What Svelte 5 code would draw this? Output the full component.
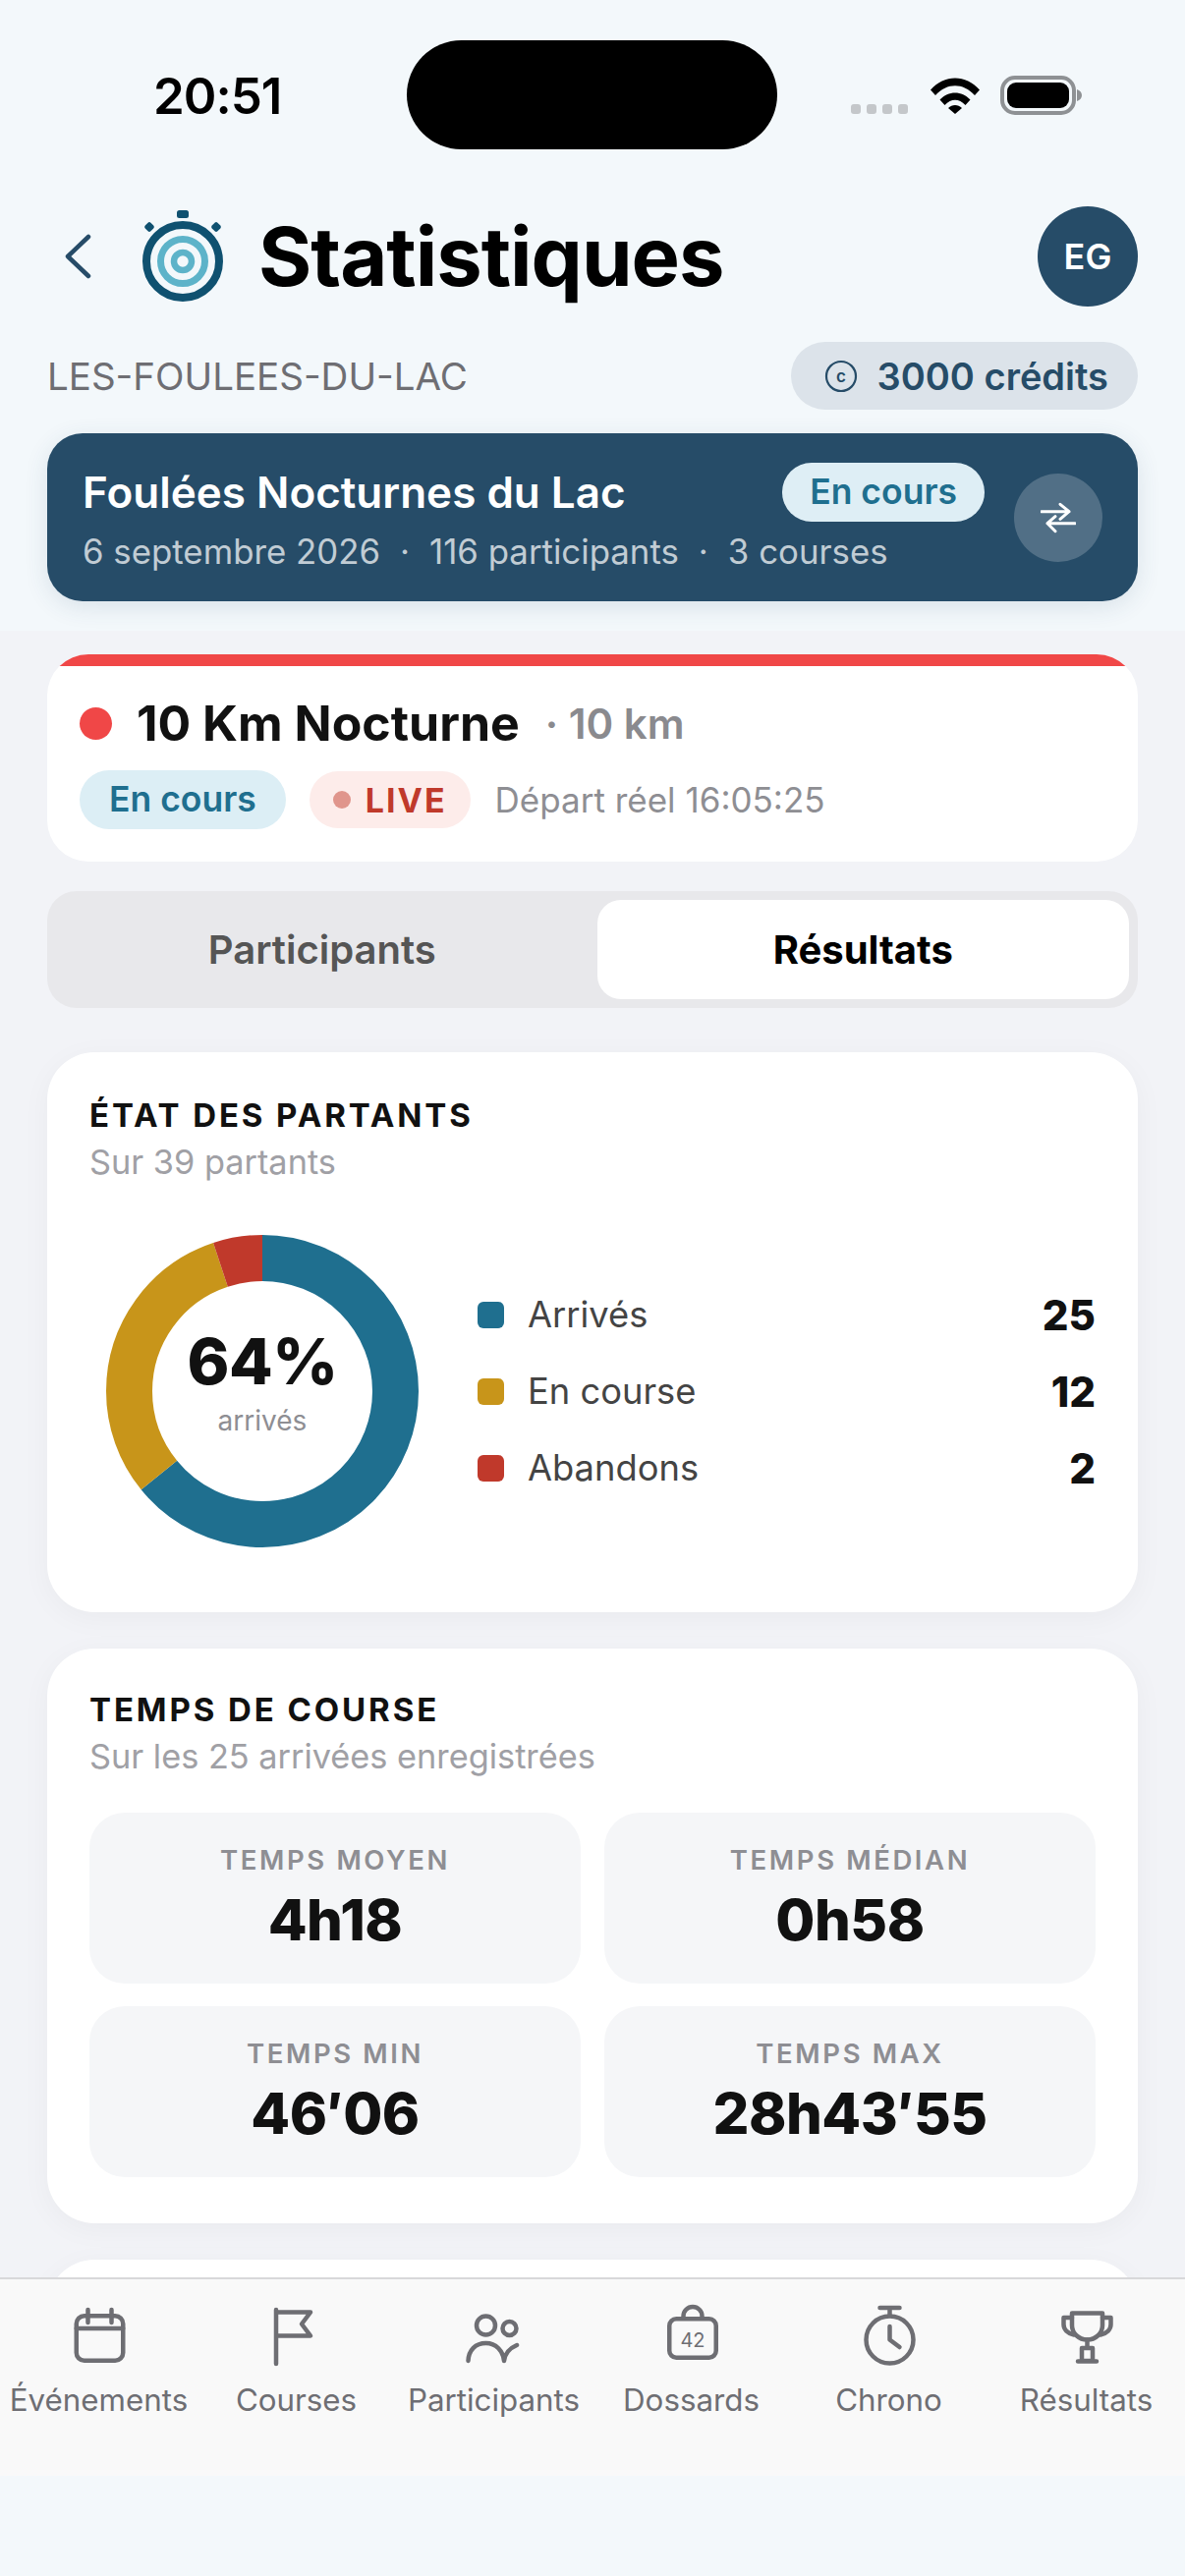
<script lang="ts">
	const legend = [
		{ label: 'Arrivés', value: 25, color: '#1f6f8f' },
		{ label: 'En course', value: 12, color: '#c8951a' },
		{ label: 'Abandons', value: 2, color: '#c0392b' }
	];
	const total = legend.reduce((sum, item) => sum + item.value, 0);

	// donut ring geometry, one dashed circle per segment
	const radius = 135.5;
	const circumference = 2 * Math.PI * radius;
	let acc = 0;
	const segments = legend.map((item) => {
		const length = (item.value / total) * circumference;
		const seg = { color: item.color, length, offset: -acc };
		acc += length;
		return seg;
	});

	const times = [
		{ label: 'TEMPS MOYEN', value: '4h18' },
		{ label: 'TEMPS MÉDIAN', value: '0h58' },
		{ label: 'TEMPS MIN', value: '46′06' },
		{ label: 'TEMPS MAX', value: '28h43′55' }
	];
</script>

<svelte:head>
	<title>Statistiques</title>
</svelte:head>

<div class="screen">
	<header class="top">
		<div class="status">
			<span class="time">20:51</span>
			<div class="island"></div>
			<div class="status-icons">
				<div class="signal"><i></i><i></i><i></i><i></i></div>
				<svg class="wifi" width="50" height="37" viewBox="0 0 50 37" aria-hidden="true">
					<path d="M0 12.5C14-3.5 36-3.5 50 12.5L45 18C33 5 17 5 5 18Z" />
					<path d="M9.5 22.5C18 13 32 13 40.5 22.5L35.5 28C29 21 21 21 14.5 28Z" />
					<path d="M18 31C22 27 28 27 32 31L25 37Z" />
				</svg>
				<svg class="battery" width="84" height="40" viewBox="0 0 84 40" aria-hidden="true">
					<rect x="2" y="2" width="73" height="36" rx="13" fill="none" stroke="#8e9194" stroke-width="4" />
					<rect x="7" y="7" width="63" height="26" rx="9" fill="#000" />
					<path d="M78 14c3 1 5 3 5 6s-2 5-5 6z" fill="#8e9194" />
				</svg>
			</div>
		</div>

		<div class="title-row">
			<button class="back" type="button" aria-label="Retour">
				<svg width="30" height="50" viewBox="0 0 30 50">
					<path d="M26 5L5 25L26 45" fill="none" stroke="#264c68" stroke-width="4.5" stroke-linecap="round" stroke-linejoin="round" />
				</svg>
			</button>
			<svg class="logo" width="92" height="102" viewBox="0 0 92 102" aria-hidden="true">
				<rect x="40" y="4" width="12" height="8" rx="2.5" fill="#0f5170" />
				<rect x="8" y="17" width="8" height="8" rx="2" fill="#0f5170" transform="rotate(45 12 21)" />
				<rect x="76" y="17" width="8" height="8" rx="2" fill="#0f5170" transform="rotate(45 80 21)" />
				<circle cx="46" cy="56" r="37" fill="none" stroke="#0f5170" stroke-width="8" />
				<circle cx="46" cy="56" r="22.5" fill="none" stroke="#5db3c9" stroke-width="7" />
				<circle cx="46" cy="56" r="9" fill="none" stroke="#5db3c9" stroke-width="6.5" />
			</svg>
			<h1>Statistiques</h1>
			<div class="avatar">EG</div>
		</div>

		<div class="org-row">
			<span class="org">LES-FOULEES-DU-LAC</span>
			<div class="credits">
				<svg width="34" height="34" viewBox="0 0 34 34" aria-hidden="true">
					<circle cx="17" cy="17" r="15" fill="none" stroke="#264c68" stroke-width="2.2" />
					<text x="17" y="22.5" text-anchor="middle" font-size="17" font-weight="600" fill="#264c68">c</text>
				</svg>
				3000 crédits
			</div>
		</div>

		<div class="event">
			<div class="event-main">
				<div class="event-head">
					<span class="event-name">Foulées Nocturnes du Lac</span>
					<span class="event-pill">En cours</span>
				</div>
				<div class="event-sub">
					<span>6 septembre 2026</span><b>·</b><span>116 participants</span><b>·</b><span>3 courses</span>
				</div>
			</div>
			<button class="swap" type="button" aria-label="Changer">
				<svg width="36" height="36" viewBox="0 0 36 36">
					<path d="M1 11.7H29M20 4.3L29 11.7L20 19.3M35 23.7H7M15 16.7L7 23.7L15 31.7" fill="none" stroke="#fff" stroke-width="3" stroke-linecap="round" stroke-linejoin="round" />
				</svg>
			</button>
		</div>
	</header>

	<main class="content">
		<section class="race">
			<div class="race-title">
				<span class="race-dot"></span>
				<h2>10 Km Nocturne</h2>
				<span class="race-dist">· 10 km</span>
			</div>
			<div class="race-meta">
				<span class="race-pill">En cours</span>
				<span class="live"><i></i>LIVE</span>
				<span class="start">Départ réel 16:05:25</span>
			</div>
		</section>

		<div class="tabs">
			<button type="button" class="tab">Participants</button>
			<button type="button" class="tab active">Résultats</button>
		</div>

		<section class="card state">
			<h3>ÉTAT DES PARTANTS</h3>
			<p class="card-sub">Sur {total} partants</p>
			<div class="chart-row">
				<div class="donut">
					<svg width="318" height="318" viewBox="0 0 318 318" aria-hidden="true">
						<g transform="rotate(-90 159 159)">
							{#each segments as seg}
								<circle
									cx="159"
									cy="159"
									r={radius}
									fill="none"
									stroke={seg.color}
									stroke-width="47"
									stroke-dasharray="{seg.length} {circumference - seg.length}"
									stroke-dashoffset={seg.offset}
								/>
							{/each}
						</g>
					</svg>
					<div class="donut-label">
						<strong>64%</strong>
						<span>arrivés</span>
					</div>
				</div>
				<ul class="legend">
					{#each legend as item}
						<li>
							<i style="background: {item.color}"></i>
							<span>{item.label}</span>
							<b>{item.value}</b>
						</li>
					{/each}
				</ul>
			</div>
		</section>

		<section class="card times">
			<h3>TEMPS DE COURSE</h3>
			<p class="card-sub">Sur les 25 arrivées enregistrées</p>
			<div class="time-grid">
				{#each times as t}
					<div class="tile">
						<span>{t.label}</span>
						<strong>{t.value}</strong>
					</div>
				{/each}
			</div>
		</section>

		<section class="card next"></section>
	</main>

	<nav class="tabbar">
		<a href="#evenements">
			<svg width="72" height="72" viewBox="0 0 72 72" aria-hidden="true">
				<rect x="12.75" y="14.25" width="47.5" height="45.5" rx="8" />
				<path d="M12.75 27H60.25M24.5 8V21M48.5 8V21" />
			</svg>
			<span>Événements</span>
		</a>
		<a href="#courses">
			<svg width="72" height="72" viewBox="0 0 72 72" aria-hidden="true">
				<path d="M15 8V63M15 10.5H50L41 22.5L50 34.5H15" />
			</svg>
			<span>Courses</span>
		</a>
		<a href="#participants">
			<svg width="72" height="72" viewBox="0 0 72 72" aria-hidden="true">
				<circle cx="27.5" cy="24" r="9.5" />
				<circle cx="51.5" cy="27" r="7" />
				<path d="M9.5 60C10 49 17 42 27.5 42C38 42 45 50 46 60C47 52 52 47 59 44" />
			</svg>
			<span>Participants</span>
		</a>
		<a href="#dossards">
			<svg width="72" height="72" viewBox="0 0 72 72" aria-hidden="true">
				<rect x="13.25" y="17.25" width="47.5" height="39.5" rx="7" />
				<path d="M27.5 16V14.5a9.5 9.5 0 0 1 19 0V16" />
				<text x="37" y="46" text-anchor="middle" font-size="20">42</text>
			</svg>
			<span>Dossards</span>
		</a>
		<a href="#chrono">
			<svg width="72" height="72" viewBox="0 0 72 72" aria-hidden="true">
				<circle cx="36.5" cy="38.5" r="24" />
				<path d="M26.5 6H46.5M36.5 6V14M36.5 25V38.5L46.5 46" />
			</svg>
			<span>Chrono</span>
		</a>
		<a href="#resultats">
			<svg width="72" height="72" viewBox="0 0 72 72" aria-hidden="true">
				<path d="M21 11.5H52V24C52 32 45 38.5 36.5 38.5C28 38.5 21 32 21 24Z" />
				<path d="M21 16H12.5V23C12.5 28 16.5 32 23 33.5M52 16H60.5V23C60.5 28 56.5 32 50 33.5" />
				<path d="M36.5 38.5V47M31 47H42V60H31ZM27 60.5H46" />
			</svg>
			<span>Résultats</span>
		</a>
	</nav>
	<div class="home-area"></div>
</div>

<style>
	:global(body) {
		margin: 0;
		font-family: Inter, 'Liberation Sans', sans-serif;
		background: #f3f8fb;
		color: #111;
	}

	:global(*) {
		box-sizing: border-box;
	}

	.screen {
		width: 1206px;
		height: 2622px;
		display: flex;
		flex-direction: column;
		overflow: hidden;
		background: #f3f8fb;
	}

	.top {
		flex: none;
		padding-bottom: 30px;
		background: #f3f8fb;
	}

	.status {
		position: relative;
		height: 210px;
		display: flex;
		justify-content: space-between;
		align-items: flex-start;
		padding: 72px 104px 0 156px;
	}

	.time {
		font-size: 51px;
		line-height: 52px;
		font-weight: 600;
		color: #000;
		letter-spacing: -1px;
	}

	.island {
		position: absolute;
		left: 414px;
		top: 41px;
		width: 377px;
		height: 111px;
		border-radius: 56px;
		background: #000;
	}

	.status-icons {
		display: flex;
		align-items: flex-end;
		margin-top: 5px;
		height: 40px;
	}

	.signal {
		display: flex;
		gap: 6px;
		margin-right: 23px;
		padding-bottom: 1px;
	}

	.signal i {
		width: 10px;
		height: 10px;
		border-radius: 3px;
		background: #c4c7ca;
	}

	.wifi {
		fill: #000;
		margin-right: 21px;
		margin-bottom: 1px;
	}

	.title-row {
		display: flex;
		align-items: center;
		height: 102px;
		padding: 0 48px;
	}

	.back {
		width: 92px;
		height: 102px;
		padding: 0 0 0 16px;
		border: none;
		background: transparent;
		display: flex;
		align-items: center;
		justify-content: flex-start;
	}

	.logo {
		flex: none;
	}

	h1 {
		flex: 1;
		margin: 0 0 0 31px;
		font-size: 83px;
		line-height: 102px;
		font-weight: 700;
		letter-spacing: -1px;
		color: #000;
	}

	.avatar {
		width: 102px;
		height: 102px;
		border-radius: 50%;
		background: #264c68;
		color: #fff;
		font-size: 36px;
		font-weight: 600;
		display: flex;
		align-items: center;
		justify-content: center;
	}

	.org-row {
		display: flex;
		align-items: center;
		justify-content: space-between;
		margin-top: 36px;
		padding: 0 48px;
	}

	.org {
		font-size: 38.5px;
		color: #6e6e73;
	}

	.credits {
		display: flex;
		align-items: center;
		gap: 20px;
		height: 69px;
		padding: 0 30px 0 34px;
		border-radius: 35px;
		background: #dce3ea;
		color: #264c68;
		font-size: 38px;
		font-weight: 600;
	}

	.credits text {
		font-family: Inter, sans-serif;
	}

	.event {
		display: flex;
		align-items: center;
		gap: 30px;
		margin: 24px 48px 0;
		padding: 30px 36px 29px;
		border-radius: 36px;
		background: #264c68;
		box-shadow: 0 6px 24px rgba(38, 76, 104, 0.12);
	}

	.event-main {
		flex: 1;
		min-width: 0;
	}

	.event-head {
		display: flex;
		align-items: center;
		justify-content: space-between;
		height: 60px;
	}

	.event-name {
		font-size: 44px;
		font-weight: 600;
		color: #fff;
	}

	.event-pill {
		height: 60px;
		padding: 0 28px;
		border-radius: 30px;
		background: #deeef5;
		color: #1f6f8f;
		font-size: 35.5px;
		line-height: 60px;
		font-weight: 600;
	}

	.event-sub {
		margin-top: 8px;
		font-size: 34.8px;
		line-height: 44px;
		color: rgba(255, 255, 255, 0.72);
	}

	.event-sub b {
		margin: 0 20px;
		font-weight: 400;
	}

	.swap {
		flex: none;
		width: 90px;
		height: 90px;
		padding: 0;
		border: none;
		border-radius: 50%;
		background: rgba(255, 255, 255, 0.2);
		display: flex;
		align-items: center;
		justify-content: center;
	}

	.content {
		flex: 1;
		min-height: 0;
		overflow: hidden;
		padding: 24px 48px 0;
		background: #f2f3f7;
	}

	.race {
		height: 211px;
		padding: 40px 33px 0;
		border-radius: 42px;
		background: #fff;
		overflow: hidden;
		position: relative;
	}

	/* live accent along the top edge, clipped by the card radius */
	.race::before {
		content: '';
		position: absolute;
		left: 0;
		right: 0;
		top: 0;
		height: 12px;
		background: #f04747;
	}

	.race-title {
		display: flex;
		align-items: center;
		height: 60px;
	}

	.race-dot {
		width: 33px;
		height: 33px;
		border-radius: 50%;
		background: #f04747;
		margin-right: 25px;
	}

	h2 {
		margin: 0;
		font-size: 50px;
		font-weight: 700;
		color: #111;
	}

	.race-dist {
		margin-left: 26px;
		font-size: 42px;
		font-weight: 600;
		color: #8a8a8e;
	}

	.race-meta {
		display: flex;
		align-items: center;
		margin-top: 18px;
	}

	.race-pill {
		height: 60px;
		padding: 0 30px;
		border-radius: 30px;
		background: #dceef5;
		color: #1f6f8f;
		font-size: 35.5px;
		line-height: 60px;
		font-weight: 600;
	}

	.live {
		display: flex;
		align-items: center;
		height: 58px;
		margin-left: 24px;
		padding: 0 24px;
		border-radius: 29px;
		background: #fdecea;
		color: #c0392b;
		font-size: 34px;
		font-weight: 700;
		letter-spacing: 2px;
	}

	.live i {
		width: 18px;
		height: 18px;
		margin-right: 15px;
		border-radius: 50%;
		background: #e0958c;
	}

	.start {
		margin-left: 25px;
		font-size: 35px;
		color: #8e8e93;
	}

	.tabs {
		display: flex;
		gap: 9px;
		height: 119px;
		margin-top: 30px;
		padding: 9px;
		border-radius: 30px;
		background: #e8e8eb;
	}

	.tab {
		flex: 1;
		border: none;
		border-radius: 24px;
		background: transparent;
		font-family: inherit;
		font-size: 40px;
		font-weight: 600;
		color: #555;
	}

	.tab.active {
		background: #fff;
		color: #000;
		font-weight: 700;
	}

	.card {
		border-radius: 48px;
		background: #fff;
		box-shadow: 0 6px 30px rgba(0, 0, 0, 0.04);
		padding: 0 43px;
	}

	.card h3 {
		margin: 0;
		font-size: 33px;
		line-height: 44px;
		font-weight: 700;
		letter-spacing: 2.9px;
		color: #111;
	}

	.card-sub {
		margin: 4px 0 0;
		font-size: 34.3px;
		line-height: 44px;
		color: #a0a0a5;
	}

	.state {
		height: 570px;
		margin-top: 45px;
		padding-top: 42px;
	}

	.chart-row {
		display: flex;
		align-items: center;
		margin-top: 52px;
		padding-left: 17px;
	}

	.donut {
		position: relative;
		width: 318px;
		height: 318px;
		flex: none;
	}

	.donut svg {
		display: block;
	}

	.donut-label {
		position: absolute;
		inset: 0;
		display: flex;
		flex-direction: column;
		align-items: center;
		justify-content: center;
		padding-bottom: 20px;
	}

	.donut-label strong {
		font-size: 65px;
		line-height: 76px;
		font-weight: 800;
		letter-spacing: -0.5px;
		color: #111;
	}

	.donut-label span {
		margin-top: 4px;
		font-size: 28px;
		line-height: 36px;
		color: #8e8e93;
	}

	.legend {
		flex: 1;
		margin: 0 0 0 60px;
		padding: 0;
		list-style: none;
		display: flex;
		flex-direction: column;
		gap: 28px;
	}

	.legend li {
		display: flex;
		align-items: center;
		height: 50px;
		font-size: 36.3px;
		color: #444;
	}

	.legend i {
		width: 27px;
		height: 27px;
		margin-right: 24px;
		border-radius: 6px;
	}

	.legend span {
		flex: 1;
	}

	.legend b {
		font-size: 42px;
		font-weight: 800;
		color: #111;
	}

	.times {
		height: 585px;
		margin-top: 37px;
		padding-top: 40px;
	}

	.time-grid {
		display: grid;
		grid-template-columns: 1fr 1fr;
		gap: 23px 24px;
		margin-top: 35px;
	}

	.tile {
		height: 174px;
		border-radius: 36px;
		background: #f5f6f8;
		display: flex;
		flex-direction: column;
		align-items: center;
		padding-top: 28px;
	}

	.tile span {
		font-size: 27.5px;
		line-height: 40px;
		font-weight: 600;
		letter-spacing: 2.6px;
		color: #8e8e93;
	}

	.tile strong {
		margin-top: 1px;
		font-size: 58px;
		line-height: 80px;
		font-weight: 800;
		letter-spacing: -0.5px;
		color: #111;
	}

	.next {
		height: 200px;
		margin-top: 37px;
	}

	.tabbar {
		flex: none;
		display: grid;
		grid-template-columns: repeat(6, 1fr);
		height: 202px;
		border-top: 2px solid #d8d8da;
		background: #f9f9f9;
		padding-top: 23px;
	}

	.tabbar a {
		display: flex;
		flex-direction: column;
		align-items: center;
		gap: 8px;
		text-decoration: none;
		color: #6e6e73;
	}

	.tabbar svg {
		display: block;
		fill: none;
		stroke: #6e6e73;
		stroke-width: 4.5;
		stroke-linecap: round;
		stroke-linejoin: round;
	}

	.tabbar text {
		fill: #6e6e73;
		stroke: none;
		font-family: Inter, sans-serif;
	}

	.tabbar span {
		font-size: 31.3px;
		line-height: 40px;
		white-space: nowrap;
	}

	.home-area {
		flex: none;
		height: 102px;
		background: #f3f8fb;
	}
</style>
